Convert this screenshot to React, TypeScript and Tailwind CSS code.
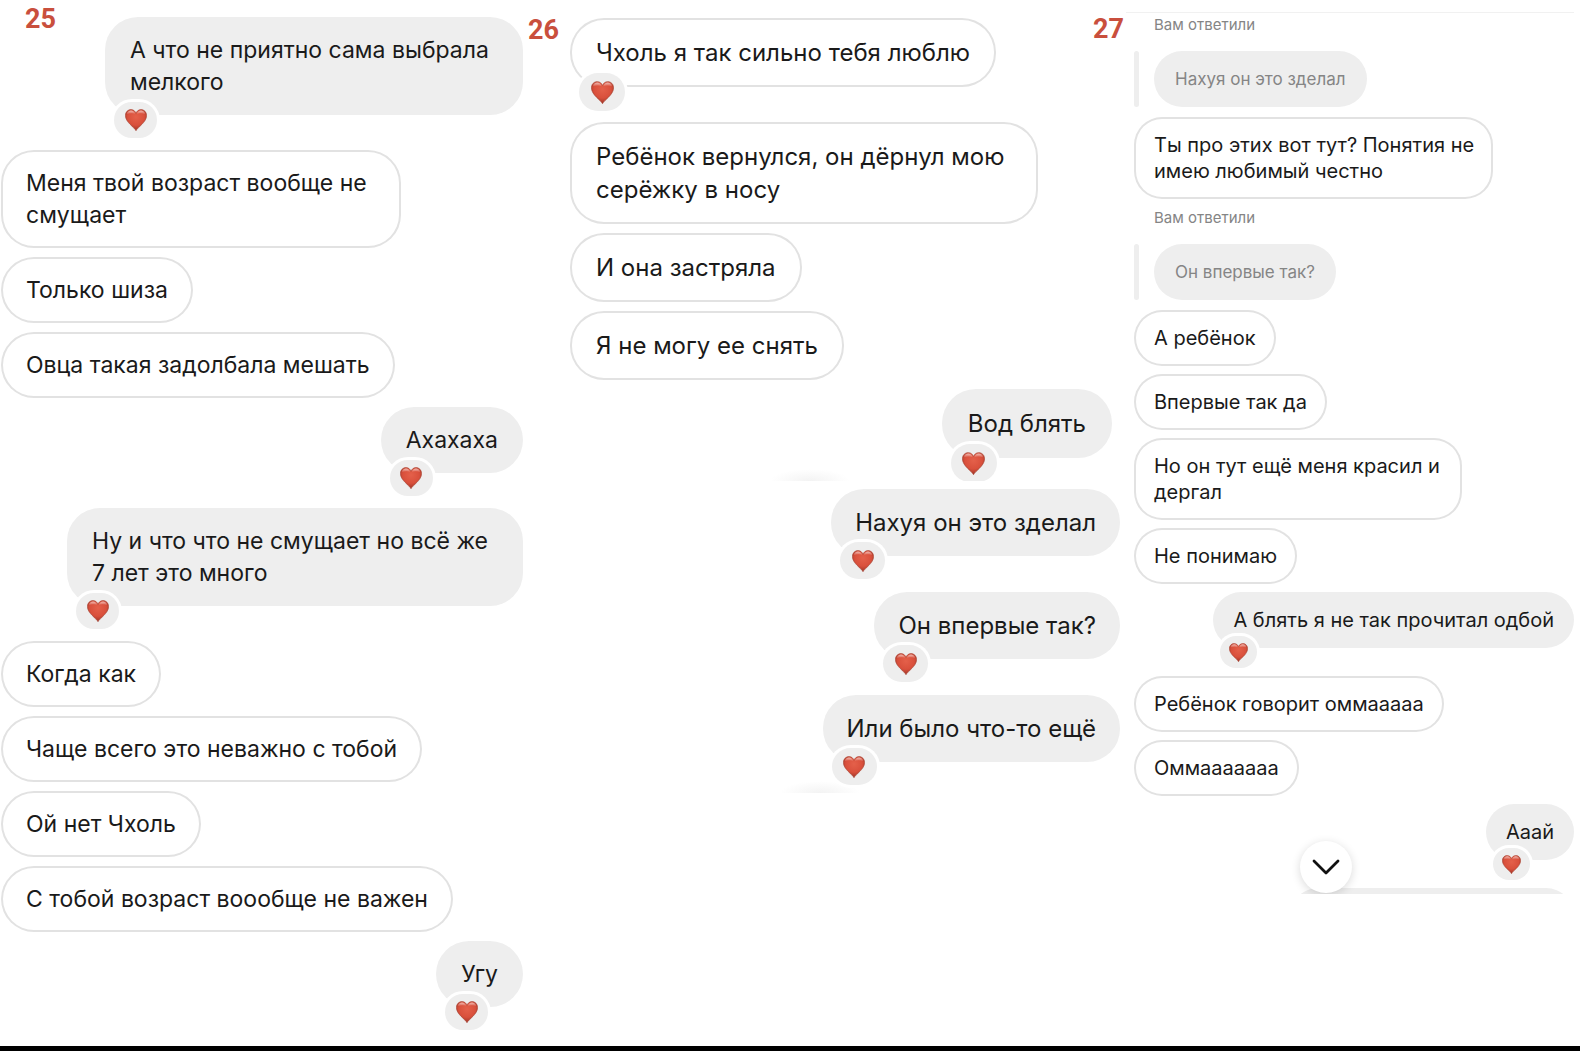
import { clsx } from 'clsx';

type Size = 'md' | 'lg' | 'xl' | 'sm';

type Message = {
    text: string;
    mine?: boolean;
    liked?: boolean;
    replyTo?: string;
    width?: string;
};

const bubbleSizes: Record<Size, string> = {
    sm: 'px-[20px] py-[15px] text-[20px] leading-[26px] rounded-[28px]',
    md: 'px-[25px] py-[17px] text-[23px] leading-[32px] rounded-[33px]',
    lg: 'px-[24px] py-[17px] text-[24px] leading-[33px] rounded-[33px]',
    xl: 'px-[26px] py-[18px] text-[24px] leading-[33px] rounded-[34px]',
};

const badgeSizes: Record<Size, string> = {
    sm: 'left-[7px] -bottom-[20px] w-[37px] h-[32px]',
    md: 'left-[9px] -bottom-[23px] w-[43px] h-[36px]',
    lg: 'left-[9px] -bottom-[23px] w-[45px] h-[37px]',
    xl: 'left-[9px] -bottom-[24px] w-[46px] h-[38px]',
};

const heartSizes: Record<Size, string> = {
    sm: 'w-[19px] h-[19px]',
    md: 'w-[22px] h-[22px]',
    lg: 'w-[22px] h-[22px]',
    xl: 'w-[23px] h-[23px]',
};

const gaps: Record<Size, string> = {
    sm: 'mb-2',
    md: 'mb-[9px]',
    lg: 'mb-[9px]',
    xl: 'mb-[9px]',
};

const likedGaps: Record<Size, string> = {
    sm: 'mb-7',
    md: 'mb-[35px]',
    lg: 'mb-[36px]',
    xl: 'mb-[35px]',
};

const ageChat: Message[] = [
    { text: 'А что не приятно сама выбрала\nмелкого', mine: true, liked: true, width: 'w-[418px]' },
    { text: 'Меня твой возраст вообще не\nсмущает', width: 'w-[400px]' },
    { text: 'Только шиза' },
    { text: 'Овца такая задолбала мешать' },
    { text: 'Ахахаха', mine: true, liked: true },
    { text: 'Ну и что что не смущает но всё же\n7 лет это много', mine: true, liked: true, width: 'w-[456px]' },
    { text: 'Когда как' },
    { text: 'Чаще всего это неважно с тобой' },
    { text: 'Ой нет Чхоль' },
    { text: 'С тобой возраст воообще не важен' },
    { text: 'Угу', mine: true, liked: true },
];

const earringChat: Message[] = [
    { text: 'Чхоль я так сильно тебя люблю', liked: true },
    { text: 'Ребёнок вернулся, он дёрнул мою\nсерёжку в носу', width: 'w-[468px]' },
    { text: 'И она застряла' },
    { text: 'Я не могу ее снять' },
    { text: 'Вод блять', mine: true, liked: true },
];

const questionChat: Message[] = [
    { text: 'Нахуя он это зделал', mine: true, liked: true },
    { text: 'Он впервые так?', mine: true, liked: true },
    { text: 'Или было что-то ещё', mine: true, liked: true },
];

const replyChat: Message[] = [
    { text: 'Ты про этих вот тут? Понятия не\nимею любимый честно', replyTo: 'Нахуя он это зделал', width: 'w-[359px]' },
    { text: 'А ребёнок', replyTo: 'Он впервые так?' },
    { text: 'Впервые так да' },
    { text: 'Но он тут ещё меня красил и\nдергал', width: 'w-[328px]' },
    { text: 'Не понимаю' },
    { text: 'А блять я не так прочитал одбой', mine: true, liked: true },
    { text: 'Ребёнок говорит оммааааа' },
    { text: 'Оммааааааа' },
    { text: 'Ааай', mine: true, liked: true },
];

export default function App() {
    return (
        <div className="min-h-screen w-full flex flex-col bg-white overflow-hidden font-['Inter','Liberation_Sans',sans-serif]">
            <HeartGradients />
            <main className="flex-1 grid grid-cols-[524fr_596fr_460fr] items-start">
                <section className="relative pt-[17px] pl-px pr-px">
                    <PartNumber className="left-[25px] top-[3px]">25</PartNumber>
                    <Chat messages={ageChat} size="md" />
                </section>

                <section className="relative">
                    <PartNumber className="left-[4px] top-[14px]">26</PartNumber>
                    <div className="relative overflow-hidden h-[481px] pt-[18px] pl-[46px] pr-2">
                        <Smudge className="left-[246px]" />
                        <Chat messages={earringChat} size="xl" />
                    </div>
                    <div className="relative overflow-hidden h-[312px] pt-2">
                        <Smudge className="left-[256px]" />
                        <Chat messages={questionChat} size="lg" />
                    </div>
                </section>

                <section className="relative">
                    <PartNumber className="-left-[27px] top-[13px]">27</PartNumber>
                    <div className="relative overflow-hidden h-[894px] pt-3 pl-[14px] pr-[6px]">
                        <div className="h-px mb-px -ml-2 bg-[#f1f1f1]" />
                        <Chat messages={replyChat} size="sm" />
                        <div className="h-[56px] ml-[156px] rounded-[28px] bg-[#eeeeee]" />
                        <button
                            aria-label="Вниз"
                            className="absolute left-[180px] bottom-px w-[52px] h-[52px] rounded-full bg-white shadow-[0_2px_10px_rgba(0,0,0,0.15)] flex items-center justify-center"
                        >
                            <svg viewBox="0 0 28 16" className="w-[28px] h-[16px]" fill="none" stroke="#111111" strokeWidth="2.8" strokeLinecap="round" strokeLinejoin="round">
                                <path d="M2 2l12 12L26 2" />
                            </svg>
                        </button>
                    </div>
                </section>
            </main>
            <div className="h-[5px] bg-black" />
        </div>
    );
}

function Chat({ messages, size }: { messages: Message[]; size: Size }) {
    return (
        <ul className="flex flex-col">
            {messages.map((message) => (
                <li
                    key={message.text}
                    className={clsx('flex flex-col', message.mine ? 'items-end' : 'items-start', message.liked ? likedGaps[size] : gaps[size])}
                >
                    {message.replyTo && <Quote text={message.replyTo} />}
                    <Bubble message={message} size={size} />
                </li>
            ))}
        </ul>
    );
}

function Bubble({ message, size }: { message: Message; size: Size }) {
    return (
        <div
            className={clsx(
                'relative whitespace-pre text-[#1a1a1a]',
                bubbleSizes[size],
                message.width,
                message.mine ? 'bg-[#eeeeee]' : 'bg-white inset-ring-2 inset-ring-[#e2e2e2]'
            )}
        >
            {message.text}
            {message.liked && (
                <span className={clsx('absolute rounded-full bg-[#eeeeee] ring-3 ring-white flex items-center justify-center', badgeSizes[size])}>
                    <Heart className={heartSizes[size]} />
                </span>
            )}
        </div>
    );
}

function Quote({ text }: { text: string }) {
    return (
        <div className="pt-1 mb-[10px]">
            <p className="pl-[20px] mb-[19px] text-[15px] leading-[14px] text-[#858585]">Вам ответили</p>
            <div className="flex gap-[15px]">
                <span className="w-[5px] rounded-full bg-[#eeeeee]" />
                <p className="px-[21px] py-[15px] rounded-[28px] bg-[#eeeeee] text-[17px] leading-[26px] text-[#858585]">{text}</p>
            </div>
        </div>
    );
}

function PartNumber({ children, className }: { children: string; className: string }) {
    return (
        <h2 className={clsx("absolute z-10 text-[27px] leading-[32px] font-bold font-['Roboto',sans-serif] text-[#c94f3d]", className)}>
            {children}
        </h2>
    );
}

function Smudge({ className }: { className: string }) {
    return <div className={clsx('absolute bottom-0 w-[80px] h-[12px] bg-[radial-gradient(ellipse_at_bottom,#f3f3f3,transparent_70%)]', className)} />;
}

function HeartGradients() {
    return (
        <svg className="absolute w-0 h-0" aria-hidden="true">
            <defs>
                <radialGradient id="heart-fill" cx="0.5" cy="0.35" r="0.65">
                    <stop offset="0" stopColor="#e4604a" />
                    <stop offset="0.6" stopColor="#d9503c" />
                    <stop offset="1" stopColor="#9c3528" />
                </radialGradient>
                <linearGradient id="heart-shine" x1="0" y1="0" x2="0" y2="1">
                    <stop offset="0" stopColor="#ffffff" stopOpacity="0.6" />
                    <stop offset="1" stopColor="#ffffff" stopOpacity="0" />
                </linearGradient>
            </defs>
        </svg>
    );
}

function Heart({ className }: { className: string }) {
    return (
        <svg viewBox="0 0 22 22" className={className} role="img" aria-label="Нравится">
            <path
                d="M11 21.7C9.300 18.200 .4 13.300 .4 6.500C.4 3 2.900 .6 6 .6C8.300 .6 10.200 2 11 4.300C11.800 2 13.700 .6 16 .6C19.100 .6 21.600 3 21.600 6.500C21.600 13.300 12.700 18.200 11 21.700Z"
                fill="url(#heart-fill)"
                stroke="#a5402f"
                strokeWidth="0.6"
            />
            <path d="M1.600 5.500C2.100 2.800 4.200 1.500 6 1.500C8 1.500 9.500 2.800 10.200 5C8 4 4.500 4 1.600 5.500Z" fill="url(#heart-shine)" />
            <path d="M20.400 5.500C19.900 2.800 17.800 1.500 16 1.500C14 1.500 12.500 2.800 11.800 5C14 4 17.500 4 20.400 5.500Z" fill="url(#heart-shine)" />
        </svg>
    );
}
